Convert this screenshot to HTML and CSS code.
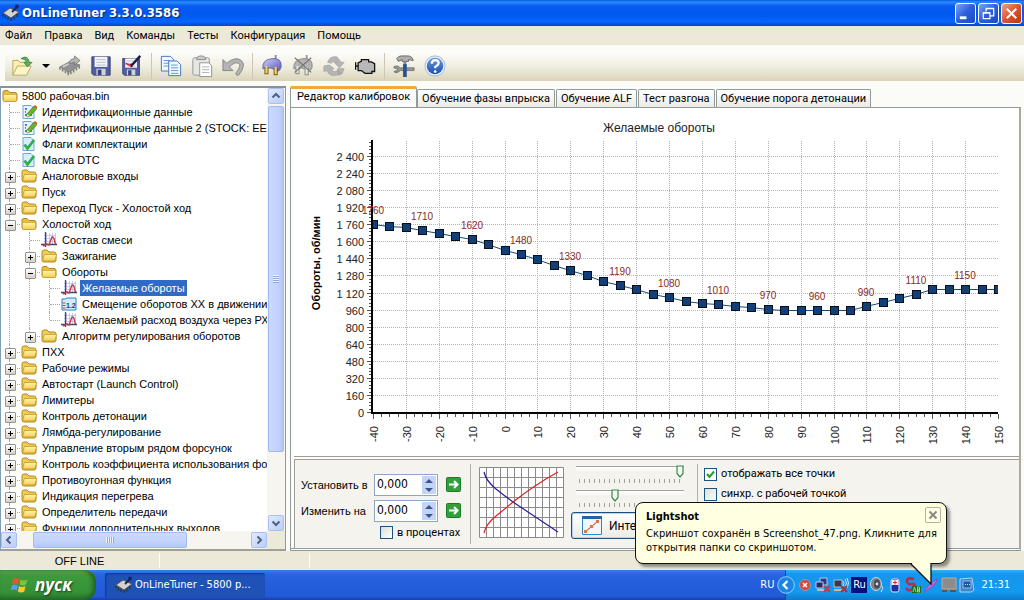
FILE: index.html
```html
<!DOCTYPE html>
<html lang="ru">
<head>
<meta charset="utf-8">
<title>OnLineTuner 3.3.0.3586</title>
<link rel="stylesheet" href="styles.css">
</head>
<body>
<svg class="defs" aria-hidden="true">
  <defs>
    <linearGradient id="gFolder" x1="0" y1="0" x2="0" y2="1"><stop offset="0" stop-color="#fff6b0"/><stop offset="1" stop-color="#f4cc50"/></linearGradient>
    <linearGradient id="gPlug" x1="0" y1="0" x2="1" y2="1"><stop offset="0" stop-color="#cfd0fa"/><stop offset="1" stop-color="#5656b4"/></linearGradient>
    <linearGradient id="gHelp" x1="0" y1="0" x2="0" y2="1"><stop offset="0" stop-color="#6a9ae0"/><stop offset="1" stop-color="#1c4ea8"/></linearGradient>
    <symbol id="folder" viewBox="0 0 16 16"><path d="M1 4q0-2 2-2h3l2 2h5q2 0 2 2v6q0 2-2 2H3q-2 0-2-2z" fill="#f2cb50" stroke="#b08a20"/><path d="M1.500 13L3.500 6.500H15.500L14 13z" fill="url(#gFolder)" stroke="#c09a30" stroke-width=".8"/></symbol>
    <symbol id="root" viewBox="0 0 16 16"><path d="M1 4q0-1.500 2-1.500h3l2 2h5q2 0 2 2v5q0 2-2 2H3q-2 0-2-2z" fill="#eabb3c" stroke="#b08a20"/><path d="M1.500 6.500h13v6q0 1-1 1h-11q-1 0-1-1z" fill="url(#gFolder)" stroke="#c09a30" stroke-width=".6"/></symbol>
    <symbol id="edit" viewBox="0 0 16 16"><path d="M2 1.500h8l3 3v10H2z" fill="#e4f3fc" stroke="#6aa9d6"/><path d="M4 5h2M4 8h1M4 11h2M8 11h3" stroke="#2b63a8" stroke-width="1.500"/><path d="M6 10L13 2l3 2.500L9 12l-3 1z" fill="#69b52f" stroke="#3c6d1c" stroke-width=".7"/><path d="M12.500 2.500L14 1l2 1.500v2z" fill="#e05a3a"/><path d="M6 10l3 2-3 1z" fill="#f6d56c"/></symbol>
    <symbol id="check" viewBox="0 0 16 16"><path d="M2 1.500h8l3 3v10H2z" fill="#d8eefb" stroke="#6aa9d6"/><path d="M3.500 8.500l3 4L13 4" fill="none" stroke="#2fb04a" stroke-width="2.800"/></symbol>
    <symbol id="graph" viewBox="0 0 16 16"><path d="M3 3.500h12M3 6.500h12M3 9.500h12M5.500 1v12M8.500 1v12M11.500 1v12M14.500 1v12" stroke="#b9bdea" stroke-width=".8"/><path d="M4.500 0v15M0 12.500h16" stroke="#42426a" stroke-width="1.300"/><path d="M2 14l4-2 2 1 3-8q2-1 3 6l1 1" fill="none" stroke="#c03a48" stroke-width="1.400"/></symbol>
    <symbol id="num" viewBox="0 0 16 16"><path d="M1 3h3l2-1h9v12H1z" fill="#d3ebfb" stroke="#2583cf"/><path d="M1.500 7h3M1.500 9.500h3M1.500 12h3" stroke="#d04040"/><text x="5" y="12" class="num-text">1.2</text></symbol>
    <symbol id="chip" viewBox="0 0 24 24"><path d="M1 13L12 7l11 4-12 8z" fill="#929292" stroke="#6c6c6c" stroke-width=".8"/><path d="M1 13v3M4 15v3M7 17v3M10 18v4M13 18v3M16 16v3M19 14v3M22 12v3" stroke="#808080" stroke-width="1.700"/><path d="M4 13l8-4" stroke="#ccc" stroke-width="2"/></symbol>
    <symbol id="floppy" viewBox="0 0 24 24"><path d="M2 2h20v20H4l-2-2z" fill="#515d9e" stroke="#39427a"/><path d="M5 2h14v11H5z" fill="#f4f5fa"/><path d="M7 5h10M7 8h10M7 11h10" stroke="#b5bacb"/><path d="M7 15h10v7H7z" fill="#cfd3dd"/><path d="M8.500 16h4v6h-4z" fill="#3a437c"/></symbol>
    <symbol id="chev" viewBox="0 0 10 10"><path d="M1.500 6.500L5 3l3.500 3.500" fill="none" stroke="#4d6185" stroke-width="2"/></symbol>
    <symbol id="plug" viewBox="0 0 24 24"><path d="M16 0v5" stroke="#8a8aa8" stroke-width="2"/><path d="M2 15Q1 5 12 4t10 9q-1 4-4 5Q11 12 2 15z" fill="url(#gPlug)" stroke="#6060a8"/><path d="M6 13v8M16 14v8" stroke="#7a5a10" stroke-width="4.500"/><path d="M6 12v8M16 13v8" stroke="#e8cf77" stroke-width="2.500"/></symbol>
    <symbol id="plugoff" viewBox="0 0 24 24"><path d="M16 0v5" stroke="#999" stroke-width="2"/><path d="M2 15Q1 5 12 4t10 9q-1 4-4 5Q11 12 2 15z" fill="#b4b4b4" stroke="#888"/><path d="M6 13v8M16 14v8" stroke="#888" stroke-width="4.500"/><path d="M6 12v8M16 13v8" stroke="#e5e5e5" stroke-width="2.500"/><path d="M3 3l18 16M21 3L3 19" stroke="#777" stroke-width="1.300"/></symbol>
    <symbol id="appchip" viewBox="0 0 18 18"><path d="M1 9l7-5 9 4-8 6z" fill="#d4d4cc" stroke="#555"/><path d="M1 10v2.500M3.500 11.500v3M6 13v3M9 14v3M12 12.500v3M15 10v3" stroke="#333" stroke-width="1.300"/><path d="M10 8l5-5" stroke="#19236b" stroke-width="1.800"/><circle cx="15" cy="2.500" r="2" fill="#19236b"/></symbol>
    <symbol id="go" viewBox="0 0 16 16"><rect x=".5" y=".5" width="14" height="14" rx="1" fill="#2fa03a" stroke="#1d7a29"/><path d="M3 7.500h8M8 4l3.500 3.500L8 11" fill="none" stroke="#fff" stroke-width="2"/></symbol>
  </defs>
</svg>

<header class="titlebar">
  <svg class="ico18"><use href="#appchip"/></svg>
  <h1 class="title">OnLineTuner 3.3.0.3586</h1>
  <button class="win" aria-label="Свернуть"><svg viewBox="0 0 20 20"><path d="M4 14.500h7" stroke="#fff" stroke-width="3"/></svg></button>
  <button class="win" aria-label="Восстановить"><svg viewBox="0 0 20 20"><path d="M7.500 8V4.500h8v8H12M7 5h9M4.500 9h7v6.500h-7zM4 9.500h8" fill="none" stroke="#fff" stroke-width="1.300"/></svg></button>
  <button class="win close" aria-label="Закрыть"><svg viewBox="0 0 20 20"><path d="M5 5l10 10M15 5L5 15" stroke="#fff" stroke-width="2.200"/></svg></button>
</header>

<nav class="menubar">
  <button>Файл</button><button>Правка</button><button>Вид</button><button>Команды</button><button>Тесты</button><button>Конфигурация</button><button>Помощь</button>
</nav>

<div class="toolbar" role="toolbar">
  <button aria-label="Открыть"><svg viewBox="0 0 24 24"><path d="M2 22V6h6l2 2h8v4" fill="#fbf0b4" stroke="#b6a45a"/><path d="M2 22l5-10h15l-5 10z" fill="#fdf6c6" stroke="#b6a45a"/><path d="M11 4q7-5 9 4h3l-5 5-4-5h3q-1-4-6-4z" fill="#5fae5b" stroke="#2f7a38" stroke-width=".8"/></svg></button>
  <button class="drop" aria-label="Недавние файлы"><svg viewBox="0 0 8 8"><path d="M0 2h8L4 6z"/></svg></button>
  <button aria-label="Прочитать"><svg viewBox="0 0 24 24"><use href="#chip"/><path d="M11 10q0-6 6-6V1l6 5-6 5V8q-3 0-6 2z" fill="#b4b4b4" stroke="#6d6d6d" stroke-width=".8"/></svg></button>
  <button aria-label="Сохранить"><svg><use href="#floppy"/></svg></button>
  <button aria-label="Сохранить как"><svg viewBox="0 0 24 24"><svg x="0" y="2" width="22" height="22"><use href="#floppy"/></svg><path d="M10 10l2 3M11 12L21 1" stroke="#1a1a4a" stroke-width="2.600"/><path d="M5 9l6 3" stroke="#d33" stroke-width="2"/></svg></button>
  <span class="sep"></span>
  <button aria-label="Копировать"><svg viewBox="0 0 24 24"><path d="M1.500 1.500h10l3 3v13h-13z" fill="#f2f8ff" stroke="#3972b5"/><path d="M4 6h7M4 9h7M4 12h7" stroke="#5a92d0"/><path d="M9.500 6.500h9l4 4v12h-13z" fill="#f2f8ff" stroke="#3972b5"/><path d="M12 11h7M12 14h8M12 17h8M12 20h8" stroke="#5a92d0"/></svg></button>
  <button aria-label="Вставить"><svg viewBox="0 0 24 24"><rect x="2" y="3" width="18" height="19" rx="2" fill="#e6e6e4" stroke="#8f8f8f"/><path d="M6 5q0-4 5-4t5 4z" fill="#ccc" stroke="#888"/><path d="M9.500 8.500h10l3 3v12h-13z" fill="#fff" stroke="#8f8f8f"/><path d="M12 13h8M12 16h8M12 19h8" stroke="#aaa"/></svg></button>
  <button aria-label="Отменить"><svg viewBox="0 0 24 24"><path d="M1 5v12h11l-4-4q6-6 10-4t-3 11l1 2h2q9-11 3-16T5 9z" fill="#b5b5b5" stroke="#808080"/></svg></button>
  <span class="sep"></span>
  <button aria-label="Подключить"><svg><use href="#plug"/></svg></button>
  <button aria-label="Отключить"><svg><use href="#plugoff"/></svg></button>
  <button aria-label="Обновить"><svg viewBox="0 0 24 24"><path d="M5 8Q7 1 15 2l5 6h3l-5 6-6-6h3q-3-3-6 1zM1 12l6-1 5 4-3 1q3 4 7 1l4 3q-7 4-13 1l-3-4-3 1zM16 15h7l-2 5-4 2z" fill="#b5b5b5" stroke="#999" stroke-width=".7"/></svg></button>
  <button aria-label="Двигатель"><svg viewBox="0 0 24 24"><path d="M4.500 8.500L8 7V5h8v2.500h3l3.500 2V18h-3v2H12l-4-3H4.500zM1.800 8v8M2 12h2" fill="#b8b8b8" stroke="#111" stroke-width="1.400"/></svg></button>
  <span class="sep"></span>
  <button aria-label="Настройки"><svg viewBox="0 0 24 24"><path d="M5 12q-6 0-3.500 2.500h3v3h-3Q1 20 5 19l3-2h15v-3H8z" fill="#999" stroke="#666" stroke-width=".8"/><path d="M4 4q2-3 5-3h7q5 0 6 5l-5-1v2h-7V5L6 7z" fill="#b0b0b0" stroke="#555" stroke-width=".9"/><path d="M13 7v5" stroke="#888" stroke-width="3"/><path d="M13 10v14" stroke="#26518f" stroke-width="4"/></svg></button>
  <button aria-label="Справка"><svg viewBox="0 0 24 24"><circle cx="12" cy="12" r="11" fill="#e8f0fb" stroke="#9fb6dc"/><circle cx="12" cy="12" r="9" fill="url(#gHelp)"/><path d="M8.500 9.500q0-4 3.700-4t3.800 3.300q0 2-3.700 4.200v1.500" fill="none" stroke="#fff" stroke-width="2.400"/><circle cx="12.200" cy="18" r="1.500" fill="#fff"/></svg></button>
</div>

<main class="main">
  <aside class="tree-panel">
    <div class="tree-view">
      <div class="row root"><svg class="ico"><use href="#root"/></svg><span>5800 рабочая.bin</span></div>
      <ul class="tree">
        <li><div class="row"><i></i><svg class="ico"><use href="#edit"/></svg><span>Идентификационные данные</span></div></li>
        <li><div class="row"><i></i><svg class="ico"><use href="#edit"/></svg><span>Идентификационные данные 2 (STOCK: EEF</span></div></li>
        <li><div class="row"><i></i><svg class="ico"><use href="#check"/></svg><span>Флаги комплектации</span></div></li>
        <li><div class="row"><i></i><svg class="ico"><use href="#check"/></svg><span>Маска DTC</span></div></li>
        <li><div class="row"><i class="plus"></i><svg class="ico"><use href="#folder"/></svg><span>Аналоговые входы</span></div></li>
        <li><div class="row"><i class="plus"></i><svg class="ico"><use href="#folder"/></svg><span>Пуск</span></div></li>
        <li><div class="row"><i class="plus"></i><svg class="ico"><use href="#folder"/></svg><span>Переход Пуск - Холостой ход</span></div></li>
        <li><div class="row"><i class="minus"></i><svg class="ico"><use href="#root"/></svg><span>Холостой ход</span></div>
          <ul>
            <li><div class="row"><i></i><svg class="ico"><use href="#graph"/></svg><span>Состав смеси</span></div></li>
            <li><div class="row"><i class="plus"></i><svg class="ico"><use href="#folder"/></svg><span>Зажигание</span></div></li>
            <li><div class="row"><i class="minus"></i><svg class="ico"><use href="#root"/></svg><span>Обороты</span></div>
              <ul>
                <li><div class="row"><i></i><svg class="ico"><use href="#graph"/></svg><span class="selected">Желаемые обороты</span></div></li>
                <li><div class="row"><i></i><svg class="ico"><use href="#num"/></svg><span>Смещение оборотов XX в движении</span></div></li>
                <li><div class="row"><i></i><svg class="ico"><use href="#graph"/></svg><span>Желаемый расход воздуха через РХ</span></div></li>
              </ul>
            </li>
            <li><div class="row"><i class="plus"></i><svg class="ico"><use href="#folder"/></svg><span>Алгоритм регулирования оборотов</span></div></li>
          </ul>
        </li>
        <li><div class="row"><i class="plus"></i><svg class="ico"><use href="#folder"/></svg><span>ПХХ</span></div></li>
        <li><div class="row"><i class="plus"></i><svg class="ico"><use href="#folder"/></svg><span>Рабочие режимы</span></div></li>
        <li><div class="row"><i class="plus"></i><svg class="ico"><use href="#folder"/></svg><span>Автостарт (Launch Control)</span></div></li>
        <li><div class="row"><i class="plus"></i><svg class="ico"><use href="#folder"/></svg><span>Лимитеры</span></div></li>
        <li><div class="row"><i class="plus"></i><svg class="ico"><use href="#folder"/></svg><span>Контроль детонации</span></div></li>
        <li><div class="row"><i class="plus"></i><svg class="ico"><use href="#folder"/></svg><span>Лямбда-регулирование</span></div></li>
        <li><div class="row"><i class="plus"></i><svg class="ico"><use href="#folder"/></svg><span>Управление вторым рядом форсунок</span></div></li>
        <li><div class="row"><i class="plus"></i><svg class="ico"><use href="#folder"/></svg><span>Контроль коэффициента использования фо</span></div></li>
        <li><div class="row"><i class="plus"></i><svg class="ico"><use href="#folder"/></svg><span>Противоугонная функция</span></div></li>
        <li><div class="row"><i class="plus"></i><svg class="ico"><use href="#folder"/></svg><span>Индикация перегрева</span></div></li>
        <li><div class="row"><i class="plus"></i><svg class="ico"><use href="#folder"/></svg><span>Определитель передачи</span></div></li>
        <li><div class="row"><i class="plus"></i><svg class="ico"><use href="#folder"/></svg><span>Функции дополнительных выходов</span></div></li>
      </ul>
    </div>
    <div class="vscroll">
      <button aria-label="Вверх"><svg><use href="#chev"/></svg></button>
      <div class="vthumb"></div>
      <button class="down" aria-label="Вниз"><svg><use href="#chev"/></svg></button>
    </div>
    <div class="hscroll">
      <button class="left" aria-label="Влево"><svg><use href="#chev"/></svg></button>
      <div class="hthumb"></div>
      <button class="right" aria-label="Вправо"><svg><use href="#chev"/></svg></button>
    </div>
    <div class="corner"></div>
  </aside>

  <section class="work">
    <div class="tabs" role="tablist">
      <button role="tab" aria-selected="true">Редактор калибровок</button>
      <button role="tab">Обучение фазы впрыска</button>
      <button role="tab">Обучение ALF</button>
      <button role="tab">Тест разгона</button>
      <button role="tab">Обучение порога детонации</button>
    </div>
    <div class="page">
      <svg class="chart" id="chart" viewBox="294 108 725 348" role="img" aria-label="Желаемые обороты"></svg>
      <div class="controls">
        <div class="form">
          <label for="set">Установить в</label>
          <div class="spin"><input id="set" type="text" value="0,000"><span class="arrows"><button aria-label="Больше"><svg viewBox="0 0 8 6"><path d="M0 5h8L4 1z"/></svg></button><button aria-label="Меньше"><svg viewBox="0 0 8 6"><path d="M0 1h8L4 5z"/></svg></button></span></div>
          <button class="go" aria-label="Установить"><svg><use href="#go"/></svg></button>
          <label for="chg">Изменить на</label>
          <div class="spin"><input id="chg" type="text" value="0,000"><span class="arrows"><button aria-label="Больше"><svg viewBox="0 0 8 6"><path d="M0 5h8L4 1z"/></svg></button><button aria-label="Меньше"><svg viewBox="0 0 8 6"><path d="M0 1h8L4 5z"/></svg></button></span></div>
          <button class="go" aria-label="Изменить"><svg><use href="#go"/></svg></button>
          <label class="tick percent"><input type="checkbox">в процентах</label>
        </div>
        <div class="rule"></div>
        <svg class="mini" viewBox="0 0 86 72"><path d="M.5 .5h84v70H.5zM7.500 0v71M14.500 0v71M21.500 0v71M28.500 0v71M35.500 0v71M42.500 0v71M49.500 0v71M56.500 0v71M63.500 0v71M70.500 0v71M77.500 0v71M0 10.500h85M0 20.500h85M0 30.500h85M0 40.500h85M0 50.500h85M0 60.500h85" fill="#fff" stroke="#8a8a8a"/><path d="M5 5Q7 14 17 22T34 35L79 65" fill="none" stroke="#2a1c9c" stroke-width="1.200"/><path d="M5 66Q7 57 17 49T34 35Q57 17 79 5" fill="none" stroke="#e02020" stroke-width="1.200"/></svg>
        <div class="sliders">
          <input type="range" min="0" max="100" value="100" aria-label="Правая граница"><div class="ticks"></div>
          <input type="range" min="0" max="100" value="35" aria-label="Сглаживание"><div class="ticks"></div>
          <button class="interp"><svg viewBox="0 0 20 20"><path d="M.5 .5h19v18H.5z" fill="#eef7ff" stroke="#2f86c9"/><path d="M0 1.500h20" stroke="#1b67b4" stroke-width="3"/><path d="M3 16L16 5" stroke="#a33" /><path d="M2 14h3v3H2zM8 9h3v3H8zM14 4h3v3h-3z" fill="#e2733c"/></svg>Инте</button>
        </div>
        <div class="rule"></div>
        <div class="checks">
          <label class="tick"><input type="checkbox" checked>отображать все точки</label>
          <label class="tick"><input type="checkbox">синхр. с рабочей точкой</label>
        </div>
      </div>
    </div>
  </section>
</main>

<footer class="status"><span>OFF LINE</span><span></span></footer>

<div class="taskbar">
  <button class="start"><svg viewBox="0 0 18 18"><path d="M2 3q3-2 6 0L7 8Q4 7 1 8z" fill="#f0532d"/><path d="M9.500 3.500q3 2 7 0l-1.500 5q-3 2-6.500 0z" fill="#7fc241"/><path d="M.8 9.500q3-2 6 0l-1 5q-3-2-6 0z" fill="#5a9df0"/><path d="M8 10q3 2 6.500 0l-1.200 5.500q-3 2-6.500 0z" fill="#fbc82e"/></svg>пуск</button>
  <button class="task"><svg class="ico18"><use href="#appchip"/></svg>OnLineTuner - 5800 р...</button>
  <span class="lang">RU</span>
  <div class="tray">
    <button class="hide" aria-label="Скрыть значки"><svg viewBox="0 0 18 18"><circle cx="9" cy="9" r="8.300" fill="#1c86e4" stroke="#8ccdfa"/><path d="M10.500 5L6.500 9l4 4" fill="none" stroke="#fff" stroke-width="2.200"/></svg></button>
    <svg viewBox="0 0 16 16"><circle cx="8" cy="8" r="5.500" fill="#d8483a" stroke="#8f9ab0"/><path d="M6 6l4 4M10 6l-4 4" stroke="#fff" stroke-width="1.500"/></svg>
    <svg viewBox="0 0 16 16"><path d="M5 1h7v7H5z" fill="#243c8c" stroke="#c3cbe0"/><path d="M1 5h7v6H1z" fill="#1b2c74" stroke="#c3cbe0"/><path d="M2 13h7" stroke="#bbb" stroke-width="2"/><path d="M9 9l6 6M15 9l-6 6" stroke="#c4394a" stroke-width="2"/></svg>
    <svg viewBox="0 0 16 16"><path d="M1 3h8v7H1z" fill="#333c56" stroke="#b8bfd0"/><path d="M1 13h8" stroke="#bbb" stroke-width="2"/><path d="M10 4q2 2 0 5M12 2q3 4 0 8M14 1q3 5 0 10" fill="none" stroke="#d6deea"/><path d="M8 9l6 6M14 9l-6 6" stroke="#a93040" stroke-width="2"/></svg>
    <span class="ru">Ru</span>
    <svg viewBox="0 0 16 16"><ellipse cx="7" cy="7" rx="5.500" ry="6.500" fill="#7d838c" stroke="#cfd4da"/><ellipse cx="8" cy="7" rx="3" ry="4.500" fill="#444b54"/><circle cx="8" cy="7" r="1.400" fill="#ddd"/><path d="M13 9q2 2-1 6" fill="none" stroke="#cde" /></svg>
    <svg viewBox="0 0 16 16"><rect x="4" y="2" width="8" height="13" rx="2" fill="#2430a0" stroke="#dde"/><rect x="4.500" y="3" width="7" height="5" fill="#f0f0f0"/><path d="M6 5.500h4M8 3.500v4" stroke="#d22"/></svg>
    <svg viewBox="0 0 16 16"><path d="M9 2Q2 0 2 4t5 3 1 4-7 0" fill="none" stroke="#c22848" stroke-width="2.600"/><path d="M7 9h9v7H7z" fill="#1c6a28"/><path d="M8 15l1.500-5 1.500 5M12.500 10v5h2v-2h-2 2v-3z" stroke="#8be070" fill="none"/></svg>
    <svg viewBox="0 0 16 16"><path d="M1 15Q5 7 14 2q0 6-13 13z" fill="#b06fd0" stroke="#8a4fc0"/></svg>
    <svg viewBox="0 0 16 16"><path d="M1 1h14v11H1z" fill="#8c8c8c" stroke="#b3aaa0"/><path d="M1 14h5M9 14h6" stroke="#555" stroke-width="2"/></svg>
    <svg viewBox="0 0 16 16"><path d="M1 2l12-1 2 12-3 2H1z" fill="#3e86cc" stroke="#a9d2f2"/><path d="M4 4h8v7H4z" fill="#1d5796" stroke="#8fc3ee"/><path d="M6 7.500h5" stroke="#cfe6fa" stroke-dasharray="1 1"/></svg>
    <time>21:31</time>
  </div>
  <div class="balloon" role="status">
    <button class="dismiss" aria-label="Закрыть"><svg viewBox="0 0 14 14"><path d="M3.500 3.500l7 7M10.500 3.500l-7 7" stroke="#8a8a80" stroke-width="2"/></svg></button>
    <strong>Lightshot</strong>
    <p>Скриншот сохранён в Screenshot_47.png. Кликните для открытия папки со скриншотом.</p>
    <svg class="tail" viewBox="0 0 22 22"><path d="M1 1l20 20V1" fill="#ffffe1" stroke="#111" stroke-width="1.300"/><path d="M2 0h18.300v1.500H2.500z" fill="#ffffe1"/></svg>
  </div>
</div>
<script src="chart.js"></script>
</body>
</html>
```
FILE: styles.css
```css
:root {
  --ui: "DejaVu Sans Condensed", "DejaVu Sans", sans-serif;
  --menu: Roboto, sans-serif;
  --tree: "Liberation Sans", Arial, sans-serif;
  --face: #ece9d8;
}
* { box-sizing: border-box; }
body {
  margin: 0;
  height: 100vh;
  display: flex;
  flex-direction: column;
  overflow: hidden;
  background: #fbfbf8;
  color: #000;
  font: 11px/14px var(--ui);
}
button { font: inherit; color: inherit; border: 0; padding: 0; background: none; }
svg { display: block; }
.defs { position: absolute; width: 0; height: 0; }
.ico18 { width: 18px; height: 18px; flex: none; }

.titlebar {
  flex: none;
  height: 26px;
  display: flex;
  align-items: center;
  gap: 2px;
  padding: 0 2px;
  background: linear-gradient(#0a5be0, #2a8bff 2px, #0a5cf0 6px, #0058ee 14px, #0466fb 22px, #0145c4);
}
.title {
  flex: 1;
  margin: 0;
  color: #fff;
  font: bold 13px/16px var(--ui);
  text-shadow: 1px 1px 1px #0a2a7c;
}
.win {
  width: 21px;
  height: 21px;
  border: 1px solid #fff;
  border-radius: 3px;
  background: linear-gradient(135deg, #7ba5f4, #2a5fdc 50%, #1b49c4);
}
.win.close { background: linear-gradient(135deg, #f0a088, #dd5430 50%, #b8360f); }

.menubar {
  flex: none;
  height: 19px;
  display: flex;
  gap: 12px;
  padding: 0 5px;
  background: var(--face);
  font: 11px/14px var(--menu);
}
.toolbar {
  flex: none;
  height: 30px;
  margin: 6px 0 5px 5px;
  display: flex;
  align-items: center;
  gap: 9px;
  padding-left: 6px;
  background: linear-gradient(#fdfdfb, #f1efe2 50%, #d9d4b9);
}
.toolbar button, .toolbar button svg { width: 22px; height: 22px; }
.toolbar .drop, .toolbar .drop svg { width: 8px; height: 8px; }
.toolbar .sep { width: 1px; height: 26px; margin: 0 -1px; background: #cbc7b2; }

.main { flex: 1; min-height: 0; display: flex; gap: 4px; background: #fbfbf8; }

.tree-panel {
  flex: none;
  width: 286px;
  display: grid;
  grid-template: minmax(0, 1fr) 18px / minmax(0, 1fr) 18px;
  border: 2px solid #8a9097;
  border-left: 1px solid #7f9db9;
  border-right: 1px solid #7f9db9;
  border-bottom-color: #a0a098;
  background: #fff;
}
.tree-view { overflow: hidden; font-family: var(--tree); }
.row { display: flex; align-items: center; height: 16px; white-space: nowrap; }
.row span { padding: 0 2px; line-height: 16px; }
.row .selected { background: #316ac5; color: #fff; }
.row.root { padding-left: 1px; }
.ico { width: 16px; height: 16px; flex: none; margin-right: 3px; }
.row.root .ico { margin-right: 2px; }
.tree, .tree ul { list-style: none; margin: 0; padding: 0; }
.tree ul { padding-left: 20px; }
.tree li { position: relative; }
.tree li::before {
  content: "";
  position: absolute;
  left: 8px;
  top: 0;
  bottom: 0;
  border-left: 1px dotted #a8a8a0;
}
.tree ul > li::before { left: 28px; }
.tree ul > li { margin-left: -20px; padding-left: 20px; }
.tree ul > li:last-child::before { bottom: auto; height: 8px; }
.row i { position: relative; flex: none; width: 20px; height: 16px; }
.row i::before {
  content: "";
  position: absolute;
  left: 9px;
  right: 1px;
  top: 8px;
  border-top: 1px dotted #a8a8a0;
}
.row .plus::after, .row .minus::after {
  content: "";
  position: absolute;
  left: 4px;
  top: 4px;
  width: 9px;
  height: 9px;
  border: 1px solid #949494;
  border-radius: 1px;
  background:
    linear-gradient(#000, #000) center / 5px 1px no-repeat,
    linear-gradient(#000, #000) center / 1px 5px no-repeat,
    linear-gradient(#fff, #d5d0c4);
}
.row .minus::after {
  background:
    linear-gradient(#000, #000) center / 5px 1px no-repeat,
    linear-gradient(#fff, #d5d0c4);
}
.num-text { font: bold 7px var(--tree); fill: #123a80; }

.vscroll, .hscroll { display: flex; background: #f6f5ef; }
.vscroll { flex-direction: column; padding: 0 1px; }
.hscroll { padding: 1px 0; }
.vscroll button, .hscroll button {
  flex: none;
  width: 16px;
  height: 16px;
  display: grid;
  place-items: center;
  border: 1px solid #a9c0f0;
  border-radius: 2px;
  background: linear-gradient(135deg, #e2eafe, #b9cdf9);
}
.vscroll button svg, .hscroll button svg { width: 10px; height: 10px; }
.down svg { transform: rotate(180deg); }
.left svg { transform: rotate(-90deg); }
.right svg { transform: rotate(90deg); }
.vthumb, .hthumb { border: 1px solid #a3baf0; border-radius: 2px; }
.vthumb {
  width: 16px;
  height: 78%;
  margin: 2px 0 auto;
  background:
    repeating-linear-gradient(#eef4fe 0 1px, #8cabe8 1px 2px) center / 6px 8px no-repeat,
    linear-gradient(90deg, #cbdafc, #c2d3fc 60%, #b4c8f6);
}
.hthumb {
  width: 58%;
  margin: 0 auto 0 16px;
  background:
    repeating-linear-gradient(90deg, #eef4fe 0 1px, #8cabe8 1px 2px) center / 8px 6px no-repeat,
    linear-gradient(#cbdafc, #c2d3fc 60%, #b4c8f6);
}
.corner { background: var(--face); }

.work { flex: 1; min-width: 0; display: flex; flex-direction: column; padding-right: 3px; }
.tabs { flex: none; display: flex; align-items: flex-end; gap: 1px; height: 21px; font: 11px/14px var(--menu); }
.tabs button {
  height: 18px;
  padding: 0 4px;
  border: 1px solid #919b9c;
  border-bottom: 0;
  border-radius: 2px 2px 0 0;
  background: linear-gradient(#fff, #ecebe6);
  white-space: nowrap;
}
.tabs button[aria-selected="true"] {
  height: 21px;
  margin-right: -1px;
  padding: 0 6px 3px;
  border-top: 3px solid #f0a93c;
  background: #fdfdfb;
}
.page {
  flex: 1;
  min-height: 0;
  display: flex;
  flex-direction: column;
  gap: 2px;
  padding-left: 3px;
  border: 1px solid #919b9c;
  border-right: 2px solid #a9aaa0;
  border-bottom: 3px double #919b9c;
  background: #fcfcfa;
}
.chart { width: 100%; border-bottom: 1px solid #9d9d96; background: #fff; }
.chart text { font: 11px var(--tree); fill: #222; }
.chart .caption { font-size: 12px; }
.chart .axis-title { font-weight: bold; fill: #000; }
.chart .mark { font-size: 10px; fill: #8c2a1c; }
.chart .grid { fill: none; stroke: #b4b4b4; stroke-dasharray: 1 1; }
.chart .tickmarks { fill: none; stroke: #555; }
.chart .axis { fill: none; stroke: #000; stroke-width: 2; }
.chart .line { fill: none; stroke: #164a78; }
.chart rect.point { fill: #123f78; stroke: #04101c; }

.controls {
  flex: 1;
  display: flex;
  align-items: stretch;
  padding: 4px 6px;
  border: 1px solid #9d9d96;
  border-right: 0;
  border-bottom: 0;
  background: #f4f3ee;
}
.form {
  display: grid;
  grid-template-columns: 65px 64px 16px;
  grid-template-rows: 22px 22px 13px;
  gap: 4px 8px;
  align-content: start;
  align-items: center;
  padding-top: 10px;
  margin-right: 8px;
}
.form > label { white-space: nowrap; font-family: var(--tree); }
.spin { display: flex; height: 22px; padding: 1px; border: 1px solid #8ba6c6; background: #fff; }
.spin input { flex: 1; min-width: 0; border: 0; padding: 0 1px 2px; background: none; font: 12px var(--ui); }
.arrows { display: flex; flex-direction: column; width: 14px; }
.arrows button { flex: 1; display: grid; place-items: center; background: #c4d4f8; }
.arrows svg { width: 8px; height: 6px; fill: #3e5486; }
.go svg { width: 16px; height: 16px; }
.tick { display: flex; align-items: center; gap: 4px; font: 11px/14px var(--menu); }
.form .percent { grid-column: 2 / 4; margin-left: 6px; font-family: var(--menu); }
.tick input {
  appearance: none;
  flex: none;
  width: 13px;
  height: 13px;
  margin: 0;
  border: 1px solid #1c5180;
  background: linear-gradient(135deg, #dcdcd7, #fff);
}
.tick input:checked {
  background: url("data:image/svg+xml,%3Csvg xmlns='http://www.w3.org/2000/svg' viewBox='0 0 11 11'%3E%3Cpath d='M2 5l2.500 3L9 2.500' fill='none' stroke='%2321a121' stroke-width='2'/%3E%3C/svg%3E") #fff;
}
.rule { flex: none; width: 1px; background: #b4b2a6; }
.mini { flex: none; width: 86px; height: 72px; margin: 3px 6px 0 8px; }
.sliders { width: 113px; margin-right: 13px; }
.sliders input {
  appearance: none;
  display: block;
  width: 108px;
  height: 14px;
  margin: 0 0 0 5px;
  background: linear-gradient(#a5a398, #a5a398) 0 2px / 100% 1px no-repeat, linear-gradient(#fff, #f1f0ea) 0 3px / 100% 6px no-repeat;
}
.sliders input::-webkit-slider-thumb {
  appearance: none;
  width: 8px;
  height: 13px;
  background: url("data:image/svg+xml,%3Csvg xmlns='http://www.w3.org/2000/svg' viewBox='0 0 8 13'%3E%3Cpath d='M1 1h6v7.500L4 12 1 8.500z' fill='%23f3f7f0' stroke='%23388a50' stroke-width='1.200'/%3E%3C/svg%3E");
}
.ticks { width: 104px; height: 4px; margin: 1px 0 5px 8px; background: repeating-linear-gradient(90deg, #a3a196 0 1px, transparent 1px 5px); }
.interp {
  display: flex;
  align-items: center;
  gap: 7px;
  width: 113px;
  height: 27px;
  padding-left: 10px;
  border: 1px solid #1d4f80;
  border-radius: 3px;
  background: linear-gradient(#fff, #ecebe5);
  box-shadow: inset 0 0 0 1px #bcd2f2;
  font: 12px/14px var(--menu);
}
.interp svg { flex: none; width: 20px; height: 20px; }
.checks { display: flex; flex-direction: column; gap: 6px; margin: 3px 0 0 6px; }

.status { flex: none; height: 19px; display: flex; padding: 2px 0; background: var(--face); font-family: var(--tree); line-height: 17px; }
.status span { width: 160px; text-align: center; border-right: 1px solid #fff; }
.status span + span { width: 150px; }

.taskbar {
  position: relative;
  flex: none;
  height: 30px;
  display: flex;
  align-items: center;
  background: linear-gradient(#3a80e8, #2a66e0 4px, #245edb 12px, #225bd9 26px, #1941a5);
  color: #fff;
}
.start {
  flex: none;
  display: flex;
  align-items: center;
  gap: 6px;
  width: 96px;
  height: 30px;
  padding-left: 11px;
  border-radius: 0 12px 12px 0;
  background: linear-gradient(#5fb25b, #3c9a3c 5px, #379237 22px, #24702a);
  box-shadow: inset -3px 0 4px #1e6122;
  font: italic bold 17px/20px "Open Sans", sans-serif;
  text-shadow: 1px 1px 2px #143c14;
}
.start svg { width: 18px; height: 18px; }
.task {
  flex: none;
  display: flex;
  align-items: center;
  gap: 2px;
  width: 160px;
  height: 25px;
  margin-left: 9px;
  padding-left: 10px;
  border-radius: 2px;
  background: #1e52b7;
  box-shadow: inset 1px 1px 2px #123a8c;
  white-space: nowrap;
}
.lang { margin-left: auto; margin-right: 11px; }
.tray {
  flex: none;
  display: flex;
  align-items: center;
  gap: 2px;
  height: 30px;
  padding-right: 14px;
  border-left: 1px solid #0c4bb0;
  background: linear-gradient(#35b2f2, #1795ec 4px, #139aee 22px, #0f7bcb);
}
.tray svg { width: 16px; height: 16px; }
.tray .hide { margin-left: -9px; }
.tray .hide svg { width: 18px; height: 18px; }
.tray .ru { width: 16px; background: #00107c; line-height: 16px; text-align: center; }
.tray time { margin-left: 4px; }

.balloon {
  position: absolute;
  right: 77px;
  bottom: 36px;
  width: 312px;
  padding: 7px 4px 8px 10px;
  border: 1px solid #111;
  border-radius: 8px;
  background: #ffffe1;
  box-shadow: 3px 3px 3px #00000066;
  color: #000;
  line-height: 14px;
}
.balloon strong { display: block; }
.balloon p { margin: 3px 0 0; }
.dismiss { position: absolute; right: 5px; top: 4px; width: 16px; height: 16px; border: 1px solid #b0b0a4; border-radius: 2px; }
.tail { position: absolute; right: 14px; top: 100%; width: 22px; height: 22px; }
```
FILE: chart.js
```javascript
const rpm = [1760, 1745, 1730, 1710, 1680, 1650, 1620, 1575, 1520, 1480, 1430, 1380, 1330,
  1280, 1230, 1190, 1150, 1105, 1080, 1045, 1025, 1010, 990, 980, 970, 960, 960, 960, 960,
  960, 990, 1030, 1070, 1110, 1150, 1150, 1150, 1150, 1150];
const plot = { left: 373, right: 998, top: 141, bottom: 412 };
const px = t => Math.round(plot.left + (t + 40) * (plot.right - plot.left) / 190);
const py = v => Math.round(plot.bottom - v * 256 / 2400);
let grid = "", ticks = "", labels = "", points = "", marks = "";

for (let v = 0; v <= 2400; v += 160) {
  const y = py(v) + 0.5;
  if (v) grid += `M${plot.left} ${y}H${plot.right}`;
  ticks += `M367 ${y}h5`;
  const text = v >= 1000 ? `${Math.floor(v / 1000)} ${String(v % 1000).padStart(3, "0")}` : v;
  labels += `<text x="364" y="${y + 4}" text-anchor="end">${text}</text>`;
}
for (let v = 0; v < 2540; v += 32) ticks += `M369 ${py(v) + 0.5}h3`;
for (let t = -40; t <= 150; t += 2.5) ticks += `M${px(t) + 0.5} 414v${t % 10 ? 3 : 5}`;
for (let t = -40; t <= 150; t += 10) {
  const x = px(t) + 0.5;
  if (t > -40 && t < 150) grid += `M${x} ${plot.top}V${plot.bottom}`;
  labels += `<text transform="translate(${x + 4} 426) rotate(-90)" text-anchor="end">${t}</text>`;
}
const line = rpm.map((v, i) => `${px(i * 5 - 40)},${py(v) + 0.5}`).join(" ");
rpm.forEach((v, i) => {
  const x = px(i * 5 - 40), y = py(v);
  points += `<rect class="point" x="${x - 3.5}" y="${y - 3.5}" width="8" height="8"/>`;
  if (i % 3 === 0) marks += `<text class="mark" x="${x}" y="${y - 10}" text-anchor="middle">${v}</text>`;
});
document.getElementById("chart").innerHTML = `
  <clipPath id="plot"><rect x="373" y="141" width="625" height="272"/></clipPath>
  <text class="caption" x="659" y="132" text-anchor="middle">Желаемые обороты</text>
  <text class="axis-title" transform="translate(320 263) rotate(-90)" text-anchor="middle">Обороты, об/мин</text>
  <path class="grid" d="${grid}"/><path class="tickmarks" d="${ticks}"/>${labels}
  <path class="axis" d="M372 140V413H998"/>
  <g clip-path="url(#plot)"><polyline class="line" points="${line}"/>${points}</g>${marks}`;
```
